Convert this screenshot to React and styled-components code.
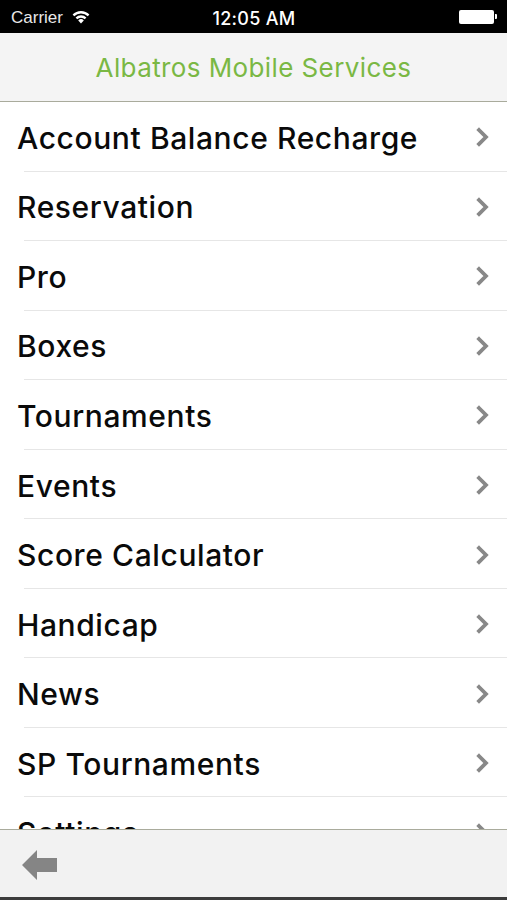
import React from 'react';
import styled, { createGlobalStyle } from 'styled-components';

const GlobalStyle = createGlobalStyle`
    html, body { margin: 0; padding: 0; background: #fff; }
    body { font-family: "Liberation Sans", Arial, sans-serif; }
    * { box-sizing: border-box; }
`;

const items = [
    'Account Balance Recharge',
    'Reservation',
    'Pro',
    'Boxes',
    'Tournaments',
    'Events',
    'Score Calculator',
    'Handicap',
    'News',
    'SP Tournaments',
    'Settings',
];

const WifiIcon = () => (
    <svg width="20" height="15" viewBox="0 0 20 15">
        <path d="M10 14.5 L7.2 11.4 A4 4 0 0 1 12.8 11.4 Z" fill="#fff" />
        <path d="M4.6 8.6 A7.6 7.6 0 0 1 15.4 8.6 L13.8 10.3 A5.4 5.4 0 0 0 6.2 10.3 Z" fill="#fff" />
        <path d="M1.6 5.6 A11.8 11.8 0 0 1 18.4 5.6 L16.8 7.3 A9.6 9.6 0 0 0 3.2 7.3 Z" fill="#fff" />
    </svg>
);

const Chevron = () => (
    <svg width="14" height="20" viewBox="0 0 14 20">
        <path d="M3 3 L10 10 L3 17" fill="none" stroke="#888" strokeWidth="3.8" strokeLinecap="square" strokeLinejoin="miter" />
    </svg>
);

const BackArrow = () => (
    <svg width="36" height="30" viewBox="0 0 36 30">
        <path d="M0 15 L15 0 L15 8 L35 8 L35 22 L15 22 L15 30 Z" fill="#858585" />
    </svg>
);

const App = () => (
    <>
        <GlobalStyle />
        <Screen>
            <StatusBar>
                <Carrier>
                    Carrier
                    <WifiIcon />
                </Carrier>
                <Clock>12:05 AM</Clock>
                <Battery>
                    <BatteryBody />
                    <BatteryNub />
                </Battery>
            </StatusBar>
            <NavBar>
                <Title>Albatros Mobile Services</Title>
            </NavBar>
            <List>
                {items.map(item => (
                    <Row key={item}>
                        <Label>{item}</Label>
                        <Chevron />
                    </Row>
                ))}
            </List>
            <Toolbar>
                <BackButton>
                    <BackArrow />
                </BackButton>
            </Toolbar>
        </Screen>
    </>
);

export default App;

const Screen = styled.div`
    width: 507px;
    height: 900px;
    display: flex;
    flex-direction: column;
    overflow: hidden;
    background: #fff;
`;
const StatusBar = styled.div`
    height: 33px;
    flex: none;
    background: #000;
    color: #fff;
    display: grid;
    grid-template-columns: 1fr auto 1fr;
    align-items: center;
    padding: 3px 10px 0 11px;
    font-size: 17px;
`;
const Carrier = styled.div`
    display: flex;
    align-items: center;
    gap: 8px;
    color: #e8e8e8;
    svg { margin-top: -3px; }
`;
const Clock = styled.div`
    font-family: Inter, "Liberation Sans", sans-serif;
    font-weight: 500;
    font-size: 18px;
    letter-spacing: 0.3px;
`;
const Battery = styled.div`
    justify-self: end;
    display: flex;
    align-items: center;
    margin-top: -3px;
`;
const BatteryBody = styled.div`
    width: 35px;
    height: 14px;
    background: #fff;
    border-radius: 2px;
`;
const BatteryNub = styled.div`
    width: 2px;
    height: 5px;
    background: #fff;
    border-radius: 0 1px 1px 0;
    margin-left: 1px;
`;
const NavBar = styled.div`
    height: 69px;
    flex: none;
    background: #f4f4f4;
    border-bottom: 1px solid #a9ab9c;
    display: flex;
    align-items: center;
    justify-content: center;
`;
const Title = styled.div`
    font-family: Inter, "Liberation Sans", sans-serif;
    color: #7ab844;
    font-size: 26px;
    letter-spacing: 0.4px;
    padding-top: 1px;
`;
const List = styled.div`
    flex: 1;
    min-height: 0;
    overflow: hidden;
    background: #fff;
`;
const Row = styled.div`
    height: 69.55px;
    margin-left: 24px;
    padding: 3px 17px 0 0;
    border-bottom: 1px solid #e6e6e6;
    display: flex;
    align-items: center;
    justify-content: space-between;
    svg { margin-top: -1px; }
`;
const Label = styled.div`
    margin-left: -7px;
    font-family: Inter, "Liberation Sans", sans-serif;
    font-weight: 500;
    font-size: 30px;
    letter-spacing: 0.6px;
    color: #0a0a0a;
`;
const Toolbar = styled.div`
    height: 71px;
    flex: none;
    background: #f2f2f2;
    border-top: 1px solid #a9ab9c;
    border-bottom: 3px solid #3c3c3c;
    display: flex;
    align-items: center;
    padding-left: 22px;
`;
const BackButton = styled.div`
    display: flex;
    padding-top: 2px;
`;
